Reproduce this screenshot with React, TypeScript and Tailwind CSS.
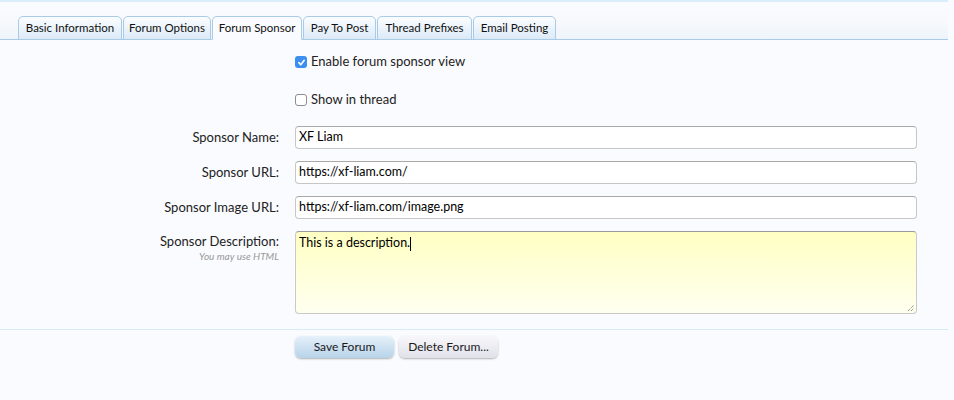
import React from "react";

const font = { fontFamily: 'Lato, "Open Sans", sans-serif' };

function Tab({ label, active, w }: { label: string; active?: boolean; w: string }) {
  return (
    <div
      className={`${w} h-[24px] -mb-px mr-px flex items-center justify-center rounded-t-[5px] border border-[#a9cbe5] text-[11.5px] text-[#111] ${
        active ? "bg-[#fafbfe] border-b-[#fafbfe]" : "bg-gradient-to-b from-[#fbfdff] to-[#dceaf7]"
      }`}
    >
      {label}
    </div>
  );
}

function Row({ label, value }: { label: string; value: string }) {
  return (
    <div className="flex items-center h-[23px]">
      <div className="w-[279px] pr-0 text-right text-[13px] text-[#222]">{label}</div>
      <div className="ml-[16px] w-[622px] h-[23px] rounded-[4px] border border-[#c6c6c6] border-t-[#a9a9a9] bg-white flex items-center px-[3px] text-[12.5px] text-black">
        {value}
      </div>
    </div>
  );
}

export default function App() {
  return (
    <div className="w-[954px] h-[400px] bg-[#fafbfe] overflow-hidden" style={font}>
      <div className="w-[948px]">
        <div className="h-[40px] border-t-2 border-[#d9edfb] border-b border-b-[#a9cbe5] bg-gradient-to-b from-[#fafbfe] via-[#f7f9fd] to-[#eef4fb] flex items-end pl-[18px]">
          <Tab label="Basic Information" w="w-[104px]" />
          <Tab label="Forum Options" w="w-[88px]" />
          <Tab label="Forum Sponsor" w="w-[90px]" active />
          <Tab label="Pay To Post" w="w-[73px]" />
          <Tab label="Thread Prefixes" w="w-[95px]" />
          <Tab label="Email Posting" w="w-[83px]" />
        </div>

        <div className="pt-[15px]">
          <label className="flex items-center ml-[295px] h-[14px] text-[13px] text-[#222]">
            <span className="w-[12px] h-[12px] rounded-[3px] bg-[#3a8ff0] flex items-center justify-center mr-[4px]">
              <svg width="9" height="9" viewBox="0 0 10 10">
                <path d="M2 5.2 L4.2 7.4 L8 2.6" fill="none" stroke="white" strokeWidth="1.8" strokeLinecap="round" strokeLinejoin="round" />
              </svg>
            </span>
            Enable forum sponsor view
          </label>
          <label className="flex items-center ml-[295px] mt-[24px] h-[14px] text-[13px] text-[#222]">
            <span className="w-[12px] h-[12px] rounded-[3px] border border-[#8e8e8e] bg-white mr-[4px]" />
            Show in thread
          </label>
        </div>

        <div className="mt-[19px] flex flex-col gap-[12px]">
          <Row label="Sponsor Name:" value="XF Liam" />
          <Row label="Sponsor URL:" value="https://xf-liam.com/" />
          <Row label="Sponsor Image URL:" value="https://xf-liam.com/image.png" />
          <div className="flex items-start">
            <div className="w-[279px] text-right pt-[2px]">
              <div className="text-[13px] text-[#222] leading-[16px]">Sponsor Description:</div>
              <div className="text-[10px] italic text-[#999] leading-[14px]">You may use HTML</div>
            </div>
            <div className="relative ml-[16px] w-[622px] h-[83px] rounded-[4px] border border-[#c9c9c9] border-t-[#9a9a9a] bg-gradient-to-b from-[#ffffc3] to-[#fffff0] px-[3px] pt-[2px] text-[12.5px] text-black">
              <span>This is a description.</span>
              <span className="inline-block w-px h-[14px] bg-black align-middle" />
              <svg className="absolute right-[1px] bottom-[1px]" width="8" height="8" viewBox="0 0 8 8">
                <path d="M1 7 L7 1 M4 7 L7 4" stroke="#666" strokeWidth="1" strokeDasharray="1 1" />
              </svg>
            </div>
          </div>
        </div>

        <div className="mt-[15px] border-t border-[#d6ebfa]" />
        <div className="flex ml-[295px] mt-[6px] gap-[5px]">
          <button className="w-[99px] h-[22px] rounded-[6px] bg-gradient-to-b from-[#e6f1fa] to-[#b7d3e9] text-[12px] text-[#1a1a1a] shadow-[0_1px_2px_rgba(0,0,0,0.3)]">
            Save Forum
          </button>
          <button className="w-[99px] h-[22px] rounded-[6px] bg-gradient-to-b from-[#f7f7fb] to-[#e1e1ea] text-[12px] text-[#1a1a1a] shadow-[0_1px_2px_rgba(0,0,0,0.3)]">
            Delete Forum...
          </button>
        </div>
      </div>
    </div>
  );
}
